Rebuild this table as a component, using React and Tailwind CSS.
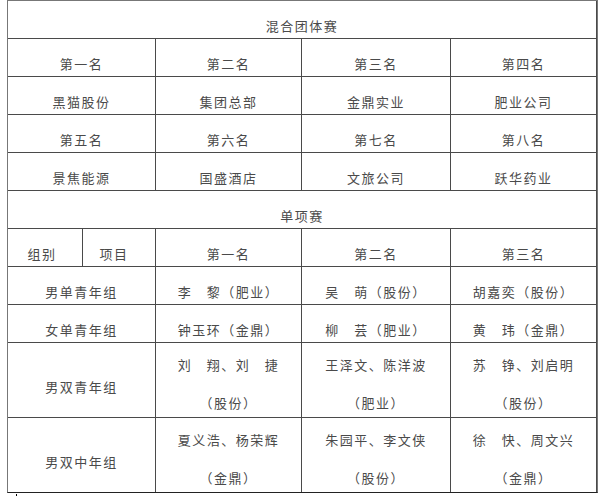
import React from "react";

const font = { fontFamily: '"Noto Sans CJK SC", "Noto Sans", sans-serif' };

function Cell({ children, span = "", h = "h-[37px]" }) {
  return (
    <div className={`bg-white ${h} ${span} flex flex-col items-center pt-[17px] leading-4 text-[13px] tracking-[1.5px] text-[#4a4a4a]`}>
      {children}
    </div>
  );
}

function Double({ top, bottom }) {
  return (
    <div className="bg-white h-[74px] flex flex-col items-center pt-[14px] gap-[22px] leading-4 text-[13px] tracking-[1.5px] text-[#4a4a4a]">
      <div>{top}</div>
      <div>{bottom}</div>
    </div>
  );
}

const teamRows = [
  ["第一名", "第二名", "第三名", "第四名"],
  ["黑猫股份", "集团总部", "金鼎实业", "肥业公司"],
  ["第五名", "第六名", "第七名", "第八名"],
  ["景焦能源", "国盛酒店", "文旅公司", "跃华药业"],
];

const singles = [
  ["男单青年组", "李　黎（肥业）", "吴　萌（股份）", "胡嘉奕（股份）"],
  ["女单青年组", "钟玉环（金鼎）", "柳　芸（肥业）", "黄　玮（金鼎）"],
];

const doubles = [
  ["男双青年组", ["刘　翔、刘　捷", "（股份）"], ["王泽文、陈洋波", "（肥业）"], ["苏　铮、刘启明", "（股份）"]],
  ["男双中年组", ["夏义浩、杨荣辉", "（金鼎）"], ["朱园平、李文侠", "（股份）"], ["徐　快、周文兴", "（金鼎）"]],
];

export default function App() {
  return (
    <div className="w-[600px] h-[496px] bg-white relative overflow-hidden" style={font}>
      <div className="ml-[7px] w-[591px] grid grid-cols-[74px_72px_145px_148px_145px] gap-px bg-[#4a4a4a] border border-[#777] border-b-[#222]">
        <Cell span="col-span-5">混合团体赛</Cell>
        {teamRows.map((row, i) =>
          row.map((t, j) => (
            <Cell key={`${i}-${j}`} span={j === 0 ? "col-span-2" : ""}>
              {t}
            </Cell>
          ))
        )}
        <Cell span="col-span-5">单项赛</Cell>
        <Cell>
          <span className="-ml-[6px]">组别</span>
        </Cell>
        <Cell>
          <span className="-ml-[10px]">项目</span>
        </Cell>
        <Cell>第一名</Cell>
        <Cell>第二名</Cell>
        <Cell>第三名</Cell>
        {singles.map((row, i) =>
          row.map((t, j) => (
            <Cell key={`s${i}-${j}`} span={j === 0 ? "col-span-2" : ""}>
              {t}
            </Cell>
          ))
        )}
        {doubles.map((row, i) => (
          <React.Fragment key={`d${i}`}>
            <div className="col-span-2 bg-white h-[74px] flex flex-col items-center pt-[36px] leading-4 text-[13px] tracking-[1.5px] text-[#4a4a4a]">
              {row[0]}
            </div>
            {row.slice(1).map((pair, j) => (
              <Double key={j} top={pair[0]} bottom={pair[1]} />
            ))}
          </React.Fragment>
        ))}
      </div>
      <div className="absolute left-[16px] top-[494px] w-px h-[2px] bg-black" />
    </div>
  );
}
